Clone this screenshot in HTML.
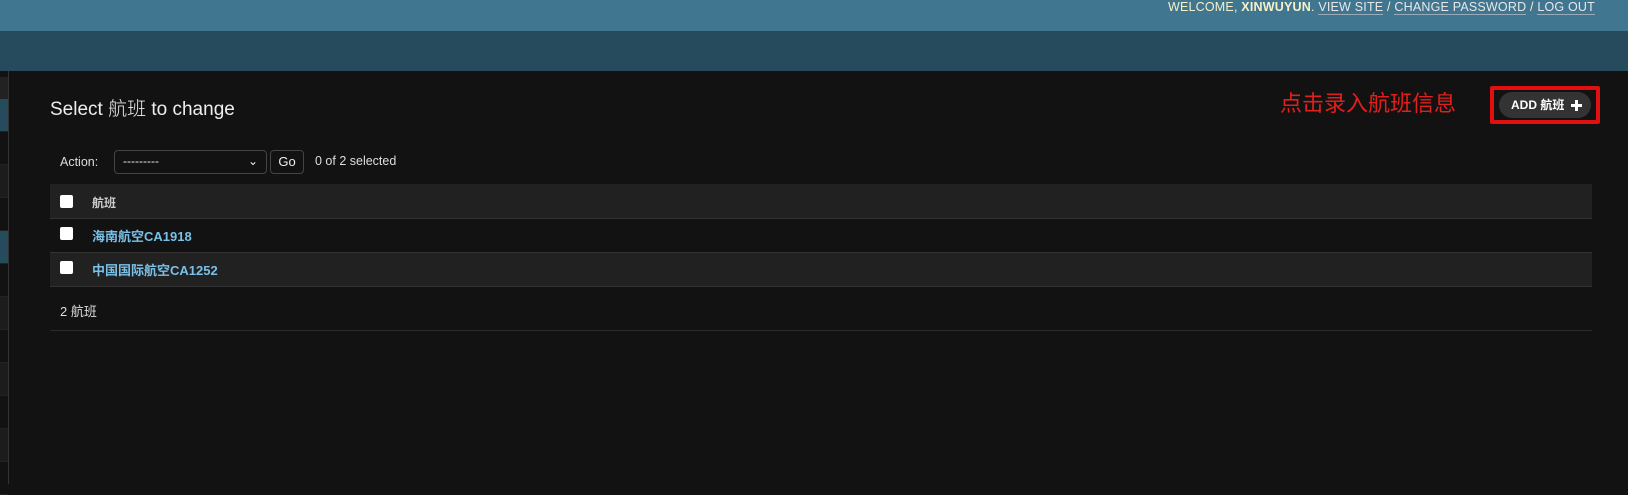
<!DOCTYPE html>
<html><head><meta charset="utf-8"><style>
*{box-sizing:border-box;margin:0;padding:0}
body{width:1628px;height:484px;background:#121212;font-family:"Liberation Sans","Noto Sans CJK SC",sans-serif;color:#eee;position:relative;overflow:hidden}
.top{position:absolute;left:0;top:0;width:1628px;height:31px;background:#417690}
.nav{position:absolute;left:0;top:31px;width:1628px;height:40px;background:#264b5d}
.user{position:absolute;right:33px;top:0px;font-size:12.5px;color:#f5f0c8;letter-spacing:.2px}
.user b{color:#f5f0c8}
.user a{color:#e8e8e8;border-bottom:1px solid #9ab;text-decoration:none}
.side{position:absolute;left:0;top:71px;width:9px;height:413px;border-right:1px solid #333}
.side div{height:33px;border-bottom:1px solid #222}
h1{position:absolute;left:50px;top:94px;font-size:19px;font-weight:300;color:#eee}
.act{position:absolute;left:60px;top:155px;font-size:12.5px;color:#ddd}
.sel{position:absolute;left:114px;top:150px;width:153px;height:24px;border:1px solid #444;border-radius:4px;background:#121212;font-size:12px;padding:3px 8px}
.go{position:absolute;left:270px;top:150px;width:34px;height:24px;border:1px solid #444;border-radius:4px;font-size:13px;text-align:center;line-height:22px}
.cnt{position:absolute;left:315px;top:154px;font-size:12.5px;color:#ddd}
.th{position:absolute;left:50px;top:184px;width:1542px;height:35px;background:#212121;border-bottom:1px solid #333}
.r{position:absolute;left:50px;width:1542px;height:34px;border-bottom:1px solid #333}
.cb{position:absolute;left:10px;width:13px;height:13px;background:#fff;border-radius:2px}
.lbl{position:absolute;left:42px;font-size:13px;font-weight:bold}
.ft{position:absolute;left:60px;top:301px;font-size:13px;color:#ddd}
.line{position:absolute;left:50px;top:330px;width:1542px;height:1px;background:#2a2a2a}
.red{position:absolute;left:1280px;top:86px;font-size:22px;color:#e0201c}
.box{position:absolute;left:1490px;top:86px;width:110px;height:38px;border:4px solid #e01010;border-radius:2px}
.btn{position:absolute;left:1499px;top:92px;width:92px;height:26px;border-radius:13px;background:#333;color:#fff;font-size:12px;font-weight:bold;line-height:26px;padding-left:12px}
.plus{position:absolute;right:9px;top:8px;width:11px;height:11px}
.plus:before{content:"";position:absolute;left:4px;top:0;width:3px;height:11px;background:#fff}
.plus:after{content:"";position:absolute;left:0;top:4px;width:11px;height:3px;background:#fff}
</style></head><body>
<div class="top"><div class="user">WELCOME, <b>XINWUYUN</b>. <a>VIEW SITE</a> / <a>CHANGE PASSWORD</a> / <a>LOG OUT</a></div></div>
<div class="nav"></div>
<div class="side"><div style="background:#222;height:22px;margin-top:6px"></div><div style="background:#264b5d"></div><div></div><div style="background:#1c1c1c"></div><div></div><div style="background:#264b5d"></div><div></div><div style="background:#1c1c1c"></div><div></div><div style="background:#1c1c1c"></div><div></div><div style="background:#1c1c1c"></div><div></div></div>
<h1>Select 航班 to change</h1>
<div class="act">Action:</div>
<div class="sel">---------<span style="float:right">&#8964;</span></div>
<div class="go">Go</div>
<div class="cnt">0 of 2 selected</div>
<div class="th"><div class="cb" style="top:11px"></div><div class="lbl" style="top:10px;color:#ccc;font-size:12px">航班</div></div>
<div class="r" style="top:219px"><div class="cb" style="top:8px"></div><div class="lbl" style="top:7px;color:#79c1e8">海南航空CA1918</div></div>
<div class="r" style="top:253px;background:#212121"><div class="cb" style="top:8px"></div><div class="lbl" style="top:7px;color:#79c1e8">中国国际航空CA1252</div></div>
<div class="ft">2 航班</div>
<div class="line"></div>
<div class="red">点击录入航班信息</div>
<div class="box"></div>
<div class="btn">ADD 航班<span class="plus"></span></div>
</body></html>
